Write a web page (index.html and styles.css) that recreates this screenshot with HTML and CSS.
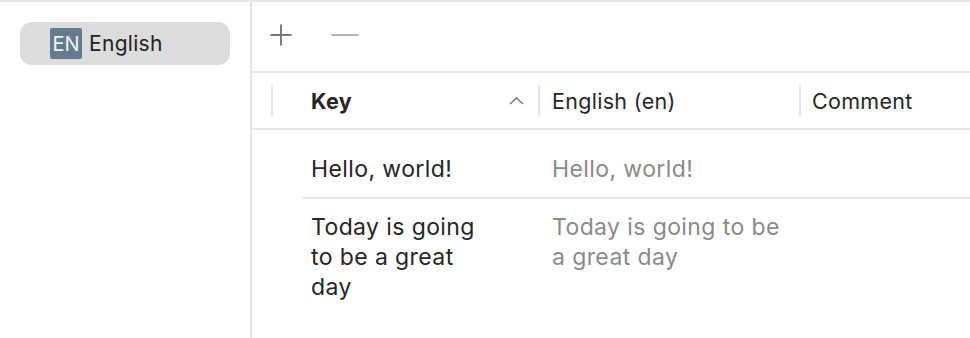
FILE: index.html
```html
<!DOCTYPE html>
<html lang="en">
<head>
  <meta charset="UTF-8">
  <title>Localizations</title>
  <link rel="stylesheet" href="styles.css">
</head>
<body>
  <div class="app">
    <!-- Language list -->
    <aside class="sidebar">
      <div class="lang-item selected">
        <span class="lang-badge">EN</span>
        <span class="lang-name">English</span>
      </div>
    </aside>

    <main class="editor">
      <!-- Toolbar -->
      <div class="toolbar">
        <button class="tool-btn" title="Add">
          <svg width="22" height="22" viewBox="0 0 22 22"><path d="M11 0.5v21M0.5 11h21" stroke="#7a7a7a" stroke-width="2" fill="none"/></svg>
        </button>
        <button class="tool-btn disabled" title="Remove">
          <svg width="28" height="22" viewBox="0 0 28 22"><path d="M0.5 11h27" stroke="#b4b4b4" stroke-width="2" fill="none"/></svg>
        </button>
      </div>

      <!-- Table header -->
      <div class="table-head">
        <div class="head-grip"></div>
        <div class="head-cell key">
          <span>Key</span>
          <svg class="sort" width="15" height="8" viewBox="0 0 15 8"><path d="M1 7l6.5-6 6.5 6" stroke="#7a7a7a" stroke-width="1.6" fill="none"/></svg>
        </div>
        <div class="head-cell value">English (en)</div>
        <div class="head-cell comment">Comment</div>
      </div>

      <!-- Rows -->
      <div class="rows">
        <div class="row">
          <div class="cell key">Hello, world!</div>
          <div class="cell value">Hello, world!</div>
          <div class="cell comment"></div>
        </div>
        <div class="row">
          <div class="cell key">Today is going to be a great day</div>
          <div class="cell value">Today is going to be a great day</div>
          <div class="cell comment"></div>
        </div>
      </div>
    </main>
  </div>
</body>
</html>
```

FILE: styles.css
```css
* {
  box-sizing: border-box;
}

body {
  margin: 0;
  font-family: Inter, "Noto Sans", sans-serif;
  color: #262626;
  background: #fff;
  overflow: hidden;
}

.app {
  display: flex;
  height: 338px;
  border-top: 2px solid #e6e6e6;
}

/* Sidebar */
.sidebar {
  width: 252px;
  flex-shrink: 0;
  padding: 20px 20px 0 20px;
  border-right: 2px solid #e4e4e4;
}

.lang-item {
  display: flex;
  align-items: center;
  gap: 7px;
  height: 43px;
  padding-left: 30px;
  border-radius: 12px;
}

.lang-item.selected {
  background: #dcdcdc;
}

.lang-badge {
  width: 32px;
  height: 31px;
  display: flex;
  align-items: center;
  justify-content: center;
  background: #637c8f;
  color: #eef3f6;
  font-size: 20px;
  border-radius: 2px;
}

.lang-name {
  font-size: 21px;
  letter-spacing: 0.3px;
  color: #222;
}

/* Editor */
.editor {
  flex: 1;
  display: flex;
  flex-direction: column;
}

.toolbar {
  height: 71px;
  display: flex;
  align-items: center;
  gap: 39px;
  padding: 0 0 4px 18px;
  border-bottom: 2px solid #e6e6e6;
}

.tool-btn {
  border: none;
  background: none;
  padding: 0;
  display: flex;
  cursor: pointer;
}

.table-head {
  height: 57px;
  display: flex;
  align-items: center;
  border-bottom: 2px solid #e6e6e6;
  font-size: 21.5px;
  letter-spacing: 0.3px;
}

.head-grip {
  width: 19px;
}

.head-cell {
  height: 31px;
  display: flex;
  align-items: center;
  border-left: 2px solid #e4e4e4;
}

.head-cell.key {
  width: 267px;
  padding: 0 14px 0 38px;
  font-weight: 700;
  justify-content: space-between;
}

.head-cell.value {
  width: 261px;
  padding-left: 12px;
}

.head-cell.comment {
  flex: 1;
  padding-left: 11px;
}

.rows {
  margin-left: 50px;
  padding-top: 11px;
}

.row {
  display: flex;
  border-bottom: 2px solid #e6e6e6;
  padding: 13px 0 13px;
  font-size: 23px;
  letter-spacing: 0.4px;
  line-height: 30px;
}

.row:last-child {
  border-bottom: none;
}

.cell.key {
  width: 238px;
  padding: 0 61px 0 9px;
}

.cell.value {
  width: 261px;
  padding: 0 14px 0 12px;
  color: #8a8a8a;
}

.cell.comment {
  flex: 1;
}
```
